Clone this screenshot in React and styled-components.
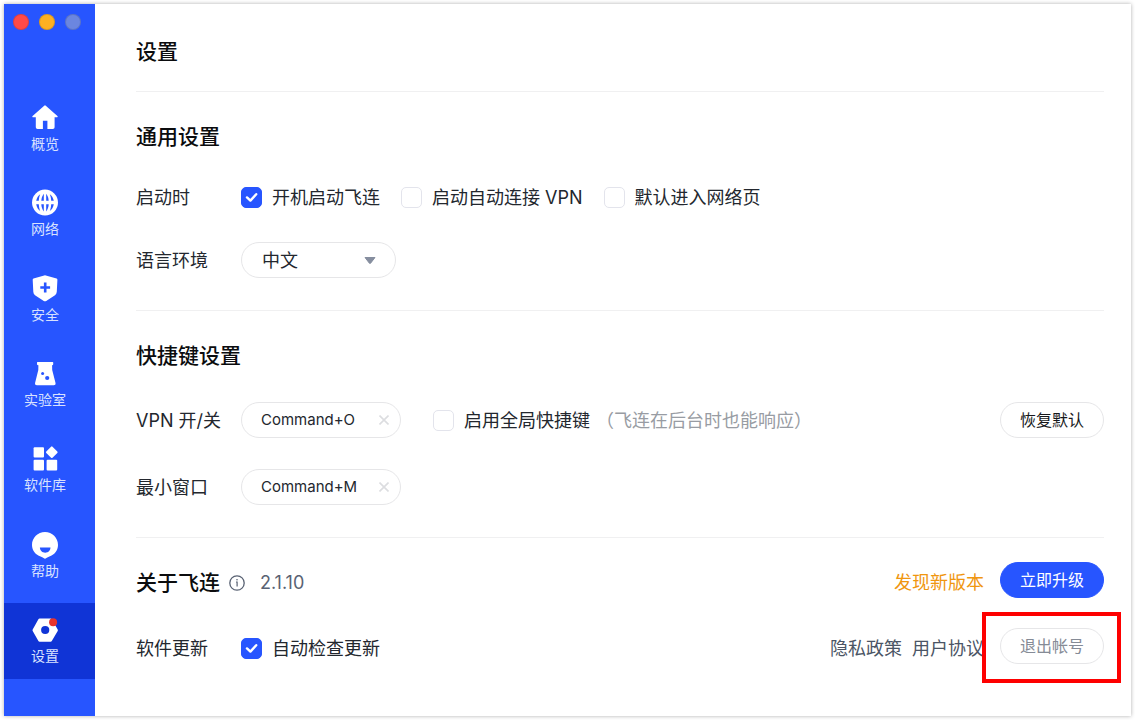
import { useState } from "react";
import styled, { createGlobalStyle } from "styled-components";

const navItems = [
  { key: "overview", label: "概览", Icon: HomeIcon },
  { key: "network", label: "网络", Icon: GlobeIcon },
  { key: "security", label: "安全", Icon: ShieldIcon },
  { key: "lab", label: "实验室", Icon: FlaskIcon },
  { key: "software", label: "软件库", Icon: AppsIcon },
  { key: "help", label: "帮助", Icon: HelpIcon },
  { key: "settings", label: "设置", Icon: SettingsIcon },
];

export default function App() {
  const [active, setActive] = useState("settings");

  return (
    <>
      <GlobalStyle />
      <Window>
        <Sidebar>
          <Lights>
            <Light $color="#ff4a48" />
            <Light $color="#fdb022" />
            <Light $color="#6b86e0" />
          </Lights>
          <Nav>
            {navItems.map(({ key, label, Icon }) => (
              <NavItem
                key={key}
                type="button"
                $active={active === key}
                onClick={() => setActive(key)}
              >
                <Icon />
                {label}
              </NavItem>
            ))}
          </Nav>
        </Sidebar>
        <Main>
          <PageTitle>设置</PageTitle>
          <GeneralSection />
          <ShortcutSection />
          <AboutSection />
        </Main>
      </Window>
    </>
  );
}

const GeneralSection = () => (
  <Section $gap={27}>
    <Heading>通用设置</Heading>
    <Row>
      <RowTitle as="span">启动时</RowTitle>
      <Options>
        <Checkbox id="boot" label="开机启动飞连" defaultChecked />
        <Checkbox id="auto-vpn" label="启动自动连接 VPN" />
        <Checkbox id="open-network" label="默认进入网络页" />
      </Options>
    </Row>
    <Row>
      <RowTitle htmlFor="language">语言环境</RowTitle>
      <SelectBox>
        <Select id="language" defaultValue="zh">
          <option value="zh">中文</option>
        </Select>
        <svg width="12" height="7" viewBox="0 0 12 7">
          <path d="M1 0.5H11L6.6 6.2Q6 6.8 5.4 6.2Z" fill="#868e9f" stroke="#868e9f" strokeLinejoin="round" />
        </svg>
      </SelectBox>
    </Row>
  </Section>
);

const ShortcutSection = () => (
  <Section $gap={31}>
    <Heading>快捷键设置</Heading>
    <Row>
      <RowTitle htmlFor="vpn-key">VPN 开/关</RowTitle>
      <Shortcut id="vpn-key" initial="Command+O" />
      <GlobalKey>
        <Checkbox id="global-key" label="启用全局快捷键" />
        <Hint>（飞连在后台时也能响应）</Hint>
      </GlobalKey>
      <Button type="button">恢复默认</Button>
    </Row>
    <Row>
      <RowTitle htmlFor="min-key">最小窗口</RowTitle>
      <Shortcut id="min-key" initial="Command+M" />
    </Row>
  </Section>
);

const AboutSection = () => (
  <Section $gap={30} $top={24}>
    <BottomRow>
      <Heading>关于飞连</Heading>
      <Version>
        <svg width="16" height="16" viewBox="0 0 16 16" fill="none" stroke="currentColor">
          <circle cx="8" cy="8" r="7.2" strokeWidth="1.3" />
          <path d="M7 7H8.1V11.6" strokeWidth="1.2" />
          <circle cx="8" cy="4.7" r="0.8" fill="currentColor" stroke="none" />
        </svg>
        2.1.10
      </Version>
      <Side>
        <NewVersion>发现新版本</NewVersion>
        <Button type="button" $primary>
          立即升级
        </Button>
      </Side>
    </BottomRow>
    <BottomRow>
      <RowTitle as="span">软件更新</RowTitle>
      <Checkbox id="auto-update" label="自动检查更新" defaultChecked />
      <Side>
        <Links>
          <Link href="#privacy">隐私政策</Link>
          <Link href="#agreement">用户协议</Link>
        </Links>
        <Marked>
          <Button type="button" $muted>
            退出帐号
          </Button>
        </Marked>
      </Side>
    </BottomRow>
  </Section>
);

const Checkbox = ({ id, label, defaultChecked = false }) => {
  const [checked, setChecked] = useState(defaultChecked);

  return (
    <CheckLabel htmlFor={id}>
      <CheckBoxWrap>
        <CheckInput
          id={id}
          type="checkbox"
          checked={checked}
          onChange={(e) => setChecked(e.target.checked)}
        />
        {checked && (
          <svg width="21" height="21" viewBox="0 0 21 21" fill="none">
            <path
              d="M6 10.4L9.4 13.6L15.2 7.2"
              stroke="#fff"
              strokeWidth="2.4"
              strokeLinecap="round"
              strokeLinejoin="round"
            />
          </svg>
        )}
      </CheckBoxWrap>
      <CheckText>{label}</CheckText>
    </CheckLabel>
  );
};

const Shortcut = ({ id, initial }) => {
  const [value, setValue] = useState(initial);

  return (
    <ShortcutBox>
      <ShortcutInput id={id} value={value} onChange={(e) => setValue(e.target.value)} />
      <ClearButton type="button" aria-label="清除" onClick={() => setValue("")}>
        <svg width="10" height="10" viewBox="0 0 10 10" stroke="#dcdde0" strokeWidth="1.6">
          <path d="M0.5 0.5L9.5 9.5M9.5 0.5L0.5 9.5" />
        </svg>
      </ClearButton>
    </ShortcutBox>
  );
};

function HomeIcon() {
  return (
    <NavSvg viewBox="0 0 26 26">
      <path d="M12.2 0.7Q13 0 13.8 0.7L25.4 11Q26.4 12.2 25 12.3H22.6V22.2Q22.6 24 20.8 24H15.4V15.8H10.9V24H5.6Q3.8 24 3.8 22.2V12.3H1Q-0.4 12.2 0.6 11Z" />
    </NavSvg>
  );
}

function GlobeIcon() {
  return (
    <NavSvg viewBox="0 0 26 26">
      <circle cx="13" cy="12.6" r="13" />
      <g fill="#2755ff" transform="translate(0 -0.4)">
        <path d="M8.2 4.6C6.1 6.1 4.7 8.5 4.2 11.2H6.8C6.9 8.8 7.4 6.5 8.2 4.6Z" />
        <path d="M17.8 4.6C19.9 6.1 21.3 8.5 21.8 11.2H19.2C19.1 8.8 18.6 6.5 17.8 4.6Z" />
        <path d="M8.2 21.4C6.1 19.9 4.7 17.5 4.2 14.6H6.8C6.9 17.1 7.4 19.5 8.2 21.4Z" />
        <path d="M17.8 21.4C19.9 19.9 21.3 17.5 21.8 14.6H19.2C19.1 17.1 18.6 19.5 17.8 21.4Z" />
        <path d="M11.8 4.2V11.2H9.3C9.5 8.4 10.4 5.8 11.8 4.2Z" />
        <path d="M14.2 4.2V11.2H16.7C16.5 8.4 15.6 5.8 14.2 4.2Z" />
        <path d="M11.8 21.8V14.6H9.3C9.5 17.6 10.4 20.2 11.8 21.8Z" />
        <path d="M14.2 21.8V14.6H16.7C16.5 17.6 15.6 20.2 14.2 21.8Z" />
      </g>
    </NavSvg>
  );
}

function ShieldIcon() {
  return (
    <NavSvg viewBox="0 0 26 26">
      <path d="M12.2 -0.6Q13 -0.9 13.8 -0.6L24.6 2.6Q25.4 2.9 25.4 3.8L24.8 15.8Q24.6 17.9 23 19.2L14.2 25Q13 25.7 11.8 25L3 19.2Q1.4 17.9 1.3 15.8L0.7 3.8Q0.7 2.9 1.5 2.6Z" />
      <path d="M13.2 6.6V16.4M8.3 11.5H18.1" stroke="#2755ff" strokeWidth="2.6" />
    </NavSvg>
  );
}

function FlaskIcon() {
  return (
    <NavSvg viewBox="0 0 26 26">
      <path d="M5.6 1H20.6Q21.2 1 21.2 1.6V3.2Q21.2 4 20.1 4.2L20.2 9L23.6 22.2Q23.9 24.3 21.8 24.3H4.8Q2.7 24.3 3 22.2L6.3 9L6.4 4.2Q5 4 5 3.2V1.6Q5 1 5.6 1Z" />
      <circle cx="10.6" cy="12.4" r="1.5" fill="#2755ff" />
      <circle cx="15.2" cy="17" r="2.1" fill="#2755ff" />
    </NavSvg>
  );
}

function AppsIcon() {
  return (
    <NavSvg viewBox="0 0 26 26">
      <rect x="1.6" y="1.2" width="10.4" height="10.4" rx="1" />
      <rect x="1.6" y="13.8" width="10.4" height="10.6" rx="1" />
      <rect x="14.6" y="13.8" width="10.6" height="10.6" rx="1" />
      <rect x="15.4" y="1.8" width="8.8" height="8.8" rx="1" transform="rotate(45 19.8 6.2)" />
    </NavSvg>
  );
}

function HelpIcon() {
  return (
    <NavSvg viewBox="0 0 26 26">
      <path d="M13 0C20.2 0 26 5.8 26 13C26 18.9 22.2 22.8 17.4 24.6C15.8 25.2 14.6 26 13.6 26.6Q13 26.9 12.4 26.6C11.4 26 10.2 25.2 8.6 24.6C3.8 22.8 0 18.9 0 13C0 5.8 5.8 0 13 0Z" />
      <path d="M7.9 15.6H18.5C18.3 18.8 16.2 20.8 13.2 20.8C10.2 20.8 8.1 18.8 7.9 15.6Z" fill="#2755ff" />
    </NavSvg>
  );
}

function SettingsIcon() {
  return (
    <NavSvg viewBox="0 0 26 26">
      <path d="M7.6 1.6H18.6Q19.4 1.6 19.8 2.3L25.7 12.5Q26.1 13.2 25.7 13.9L19.8 24Q19.4 24.7 18.6 24.7H7.6Q6.8 24.7 6.4 24L0.7 13.9Q0.3 13.2 0.7 12.5L6.4 2.3Q6.8 1.6 7.6 1.6Z" />
      <circle cx="13.2" cy="13" r="4.1" fill="#1034d6" />
      <circle cx="21.1" cy="5.3" r="4" fill="#e8332c" />
    </NavSvg>
  );
}

const GlobalStyle = createGlobalStyle`
  * {
    box-sizing: border-box;
  }
  body {
    margin: 0;
    background: #fff;
    color: #23272e;
    font-family: Inter, "Noto Sans CJK SC", sans-serif;
    font-size: 18px;
    line-height: 30px;
  }
  #root {
    display: flow-root;
  }
  button, input, select {
    font-family: inherit;
    margin: 0;
  }
  svg {
    display: block;
    flex: none;
  }
`;

const Window = styled.div`
  display: flex;
  margin: 4px;
  min-height: calc(100vh - 8px);
  background: #fff;
  box-shadow: 0 0 4px rgba(0, 0, 0, 0.32);
`;

const Sidebar = styled.aside`
  display: flex;
  flex-direction: column;
  flex: none;
  width: 91px;
  padding: 10px 0 37px;
  background: #2755ff;
`;

const Lights = styled.div`
  display: flex;
  gap: 10px;
  padding-left: 9px;
  margin-bottom: 61px;
`;

const Light = styled.span`
  width: 16px;
  height: 16px;
  border-radius: 50%;
  border: 1px solid rgba(0, 0, 0, 0.12);
  background: ${({ $color }) => $color};
`;

const Nav = styled.nav`
  display: flex;
  flex: 1;
  flex-direction: column;
  justify-content: space-between;
`;

const NavItem = styled.button`
  display: flex;
  flex-direction: column;
  align-items: center;
  gap: 3px;
  padding: 14px 9px 13px 0;
  border: none;
  background: ${({ $active }) => ($active ? "#1034d6" : "transparent")};
  color: #d9e2ff;
  font-size: 14px;
  line-height: 20px;
  cursor: pointer;
`;

const NavSvg = styled.svg`
  width: 26px;
  height: 26px;
  fill: #fff;
  overflow: visible;
`;

const Main = styled.main`
  flex: 1;
  min-width: 0;
  padding: 33px 27px 16px 41px;
`;

const PageTitle = styled.h1`
  margin: 0;
  padding-bottom: 24px;
  color: #0b0c0e;
  font-size: 21px;
  font-weight: 500;
  line-height: 30px;
`;

const Section = styled.section`
  display: flex;
  flex-direction: column;
  gap: ${({ $gap }) => $gap}px;
  padding: ${({ $top = 30 }) => $top}px 0 32px;
  border-top: 1px solid #f0f0f1;
`;

const Heading = styled.h2`
  margin: 0;
  color: #0b0c0e;
  font-size: 21px;
  font-weight: 500;
  line-height: 30px;
`;

const Row = styled.div`
  display: flex;
  align-items: center;
  min-height: 36px;
`;

const BottomRow = styled(Row)`
  align-items: flex-end;
`;

const RowTitle = styled.label`
  flex: none;
  width: 105px;
  padding-top: 2px;
`;

const Options = styled.div`
  display: flex;
  gap: 21px;
`;

const CheckLabel = styled.label`
  display: flex;
  align-items: center;
  gap: 10px;
  white-space: nowrap;
  cursor: pointer;
`;

const CheckText = styled.span`
  padding-top: 2px;
`;

const CheckBoxWrap = styled.span`
  position: relative;
  width: 21px;
  height: 21px;

  svg {
    position: absolute;
    inset: 0;
    pointer-events: none;
  }
`;

const CheckInput = styled.input`
  appearance: none;
  display: block;
  width: 21px;
  height: 21px;
  border: 1px solid #e3e4ec;
  border-radius: 5px;
  background: #fff;
  cursor: pointer;

  &:checked {
    border-color: #2755ff;
    background: #2755ff;
  }
`;

const SelectBox = styled.div`
  position: relative;

  svg {
    position: absolute;
    right: 20px;
    top: 15px;
    pointer-events: none;
  }
`;

const Select = styled.select`
  appearance: none;
  display: block;
  width: 155px;
  height: 36px;
  padding: 0 20px;
  border: 1px solid #e6e6e8;
  border-radius: 18px;
  background: #fff;
  color: inherit;
  font-size: 18px;
`;

const ShortcutBox = styled.div`
  display: flex;
  align-items: center;
  width: 160px;
  height: 36px;
  padding: 0 11px 0 19px;
  border: 1px solid #e6e6e8;
  border-radius: 18px;
`;

const ShortcutInput = styled.input`
  flex: 1;
  min-width: 0;
  padding: 0 0 2px;
  border: none;
  outline: none;
  background: none;
  color: inherit;
  font-size: 15px;
`;

const ClearButton = styled.button`
  padding: 0;
  border: none;
  background: none;
  cursor: pointer;
`;

const GlobalKey = styled.div`
  display: flex;
  flex: 1;
  gap: 6px;
  margin-left: 32px;
`;

const Hint = styled.span`
  padding-top: 2px;
  color: #989ca3;
`;

const Button = styled.button`
  height: 36px;
  padding: 0 19px 3px;
  border: 1px solid ${({ $primary }) => ($primary ? "#2755ff" : "#e6e6e8")};
  border-radius: 18px;
  background: ${({ $primary }) => ($primary ? "#2755ff" : "#fff")};
  color: ${({ $primary, $muted }) => ($primary ? "#fff" : $muted ? "#858b96" : "#16181b")};
  font-size: 16px;
  white-space: nowrap;
  cursor: pointer;
`;

const Version = styled.span`
  display: flex;
  align-items: center;
  gap: 15px;
  margin-left: 9px;
  color: #596273;
`;

const Side = styled.div`
  display: flex;
  align-items: flex-end;
  gap: 16px;
  margin-left: auto;
`;

const NewVersion = styled.span`
  color: #f0960f;
`;

const Links = styled.div`
  display: flex;
  gap: 10px;
`;

const Link = styled.a`
  color: #4b5565;
  text-decoration: none;
`;

// red frame drawn over the logout button
const Marked = styled.div`
  position: relative;

  &::after {
    content: "";
    position: absolute;
    inset: -16px -17px -19px -18px;
    border: 4px solid #fe0000;
    pointer-events: none;
  }
`;
